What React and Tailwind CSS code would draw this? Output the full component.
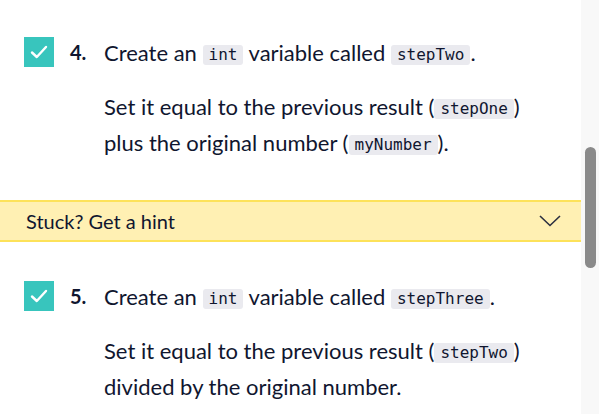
import React from "react";

const Code = ({ children }) => (
  <code className="inline-block rounded-[3px] bg-[#eaeaef] px-[6px] font-['DejaVu_Sans_Mono',monospace] text-[16px] leading-[20px] text-[#10162f] align-[1px]">
    {children}
  </code>
);

const Check = () => (
  <div className="mt-[2px] flex h-[30px] w-[30px] shrink-0 items-center justify-center bg-[#38c5bd]">
    <svg width="18" height="14" viewBox="0 0 18 14" fill="none">
      <path d="M2 7.5 L6.8 12 L16 2" stroke="white" strokeWidth="2.4" strokeLinecap="round" strokeLinejoin="round" />
    </svg>
  </div>
);

const Task = ({ num, title, children }) => (
  <div className="flex items-start pl-[24px]">
    <Check />
    <span className="ml-[16px] w-[34px] shrink-0 text-[20px] font-bold leading-[34px]">{num}</span>
    <div className="text-[22px] leading-[36px]">
      <p>{title}</p>
      <p className="mt-[18px]">{children}</p>
    </div>
  </div>
);

export default function App() {
  return (
    <div className="flex h-[414px] w-[599px] overflow-hidden bg-white font-['Lato',sans-serif] text-[#10162f]">
      <div className="flex-1 pt-[35px]">
        <Task num="4." title={<>Create an <Code>int</Code> variable called <Code>stepTwo</Code>.</>}>
          Set it equal to the previous result (<Code>stepOne</Code>)
          <br />
          plus the original number (<Code>myNumber</Code>).
        </Task>

        <div className="mt-[39px] flex h-[42px] items-center justify-between border-y-2 border-[#fde25a] bg-[#fff0b3] pl-[26px] pr-[20px]">
          <span className="text-[20px]">Stuck? Get a hint</span>
          <svg width="22" height="12" viewBox="0 0 22 12" fill="none">
            <path d="M1 1 L11 10.5 L21 1" stroke="#2b2f40" strokeWidth="1.6" />
          </svg>
        </div>

        <div className="mt-[37px]">
          <Task num="5." title={<>Create an <Code>int</Code> variable called <Code>stepThree</Code>.</>}>
            Set it equal to the previous result (<Code>stepTwo</Code>)
            <br />
            divided by the original number.
          </Task>
        </div>
      </div>
      <div className="w-[18px] shrink-0 bg-[#f8f8f8] pl-[4px] pt-[147px]">
        <div className="h-[121px] w-[11px] rounded-full bg-[#8a8a8a]" />
      </div>
    </div>
  );
}
